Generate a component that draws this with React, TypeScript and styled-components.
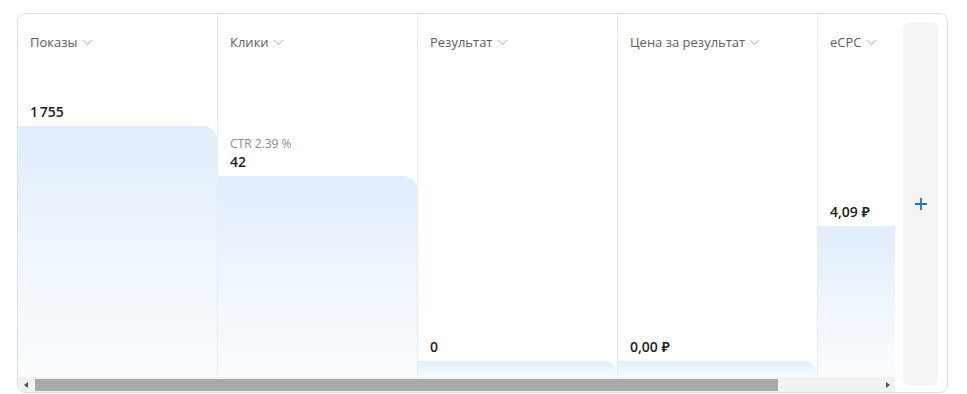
import React from "react";
import styled, { createGlobalStyle } from "styled-components";

const GlobalStyle = createGlobalStyle`
  html, body { margin: 0; padding: 0; background: #ffffff; }
  body { font-family: "Open Sans", "Noto Sans", "Liberation Sans", sans-serif; }
  * { box-sizing: border-box; }
`;

const Page = styled.div`
  padding: 13px 19px 1px 17px;
`;

const Card = styled.div`
  width: 931px;
  height: 380px;
  border: 1px solid #dedede;
  border-radius: 8px;
  display: flex;
  overflow: hidden;
  background: #fff;
`;

const ScrollArea = styled.div`
  width: 877px;
  display: flex;
  flex-direction: column;
  flex-shrink: 0;
`;

const Viewport = styled.div`
  flex: 1;
  overflow: hidden;
`;

const Track = styled.div`
  display: flex;
  height: 100%;
`;

const Column = styled.div`
  width: 200px;
  flex-shrink: 0;
  height: 100%;
  border-right: 1px solid #e3eefa;
  display: flex;
  flex-direction: column;
`;

const Header = styled.div`
  padding: 19px 12px 0;
  display: flex;
  align-items: center;
  gap: 4px;
  font-size: 13px;
  line-height: 18px;
  color: #5e5e5e;
`;

const Spacer = styled.div`
  flex: 1;
`;

const ValueBlock = styled.div`
  padding: 0 12px 5px;
  display: flex;
  flex-direction: column;
`;

const SubLabel = styled.div`
  font-size: 12px;
  line-height: 18px;
  color: #8c8c8c;
`;

const Value = styled.div`
  font-size: 14px;
  line-height: 18px;
  font-weight: 600;
  color: #222222;
`;

const Bar = styled.div<{ $h: number }>`
  height: ${(p) => p.$h}px;
  border-top-right-radius: 14px;
  background: linear-gradient(180deg, #e1edfb 0%, #eff6fd 55%, #fbfdff 100%);
  flex-shrink: 0;
`;

const ScrollBar = styled.div`
  height: 15px;
  background: #f1f1f1;
  display: flex;
  align-items: stretch;
  flex-shrink: 0;
`;

const ArrowButton = styled.div<{ $dir: "left" | "right" }>`
  width: 15px;
  display: flex;
  align-items: center;
  justify-content: center;
  flex-shrink: 0;
  &::after {
    content: "";
    width: 0;
    height: 0;
    border-top: 3.5px solid transparent;
    border-bottom: 3.5px solid transparent;
    ${(p) =>
      p.$dir === "left"
        ? "border-right: 4px solid #505050;"
        : "border-left: 4px solid #505050;"}
  }
`;

const ThumbTrack = styled.div`
  flex: 1;
  padding: 2px 0 1px 2px;
  display: flex;
`;

const Thumb = styled.div`
  background: #a8a8a8;
  height: 100%;
`;

const AddPanel = styled.div`
  margin: 8px 9px 6px 8px;
  width: 35px;
  flex-shrink: 0;
  background: #f4f4f4;
  border-radius: 8px;
  display: flex;
  align-items: center;
  justify-content: center;
`;

const AddButton = styled.button`
  border: 0;
  background: transparent;
  padding: 0;
  width: 20px;
  height: 20px;
  display: flex;
  align-items: center;
  justify-content: center;
  cursor: pointer;
  color: #1a74d0;
`;

const Chevron = () => (
  <svg width="11" height="7" viewBox="0 0 11 7" fill="none">
    <path d="M1 1.2 L5.5 5.5 L10 1.2" stroke="#c2c2c2" strokeWidth="1.1" />
  </svg>
);

const Plus = () => (
  <svg width="14" height="14" viewBox="0 0 14 14" fill="none">
    <path d="M7 1 V13 M1 7 H13" stroke="currentColor" strokeWidth="1.8" />
  </svg>
);

type Metric = { title: string; value: string; sub?: string; bar: number };

const metrics: Metric[] = [
  { title: "Показы", value: "1\u202F755", bar: 251 },
  { title: "Клики", value: "42", sub: "CTR 2.39 %", bar: 201 },
  { title: "Результат", value: "0", bar: 16 },
  { title: "Цена за результат", value: "0,00 ₽", bar: 16 },
  { title: "eCPC", value: "4,09 ₽", bar: 151 },
];

const visibleWidth = 877;
const contentWidth = metrics.length * 200;

export default function App() {
  const trackWidth = visibleWidth - 30 - 2;
  const thumbWidth = Math.round((trackWidth + 2) * (visibleWidth / contentWidth));
  return (
    <>
      <GlobalStyle />
      <Page>
        <Card>
          <ScrollArea>
            <Viewport>
              <Track>
                {metrics.map((m) => (
                  <Column key={m.title}>
                    <Header>
                      {m.title}
                      <Chevron />
                    </Header>
                    <Spacer />
                    <ValueBlock>
                      {m.sub && <SubLabel>{m.sub}</SubLabel>}
                      <Value>{m.value}</Value>
                    </ValueBlock>
                    <Bar $h={m.bar} />
                  </Column>
                ))}
              </Track>
            </Viewport>
            <ScrollBar>
              <ArrowButton $dir="left" />
              <ThumbTrack>
                <Thumb style={{ width: thumbWidth }} />
              </ThumbTrack>
              <ArrowButton $dir="right" />
            </ScrollBar>
          </ScrollArea>
          <AddPanel>
            <AddButton aria-label="Добавить">
              <Plus />
            </AddButton>
          </AddPanel>
        </Card>
      </Page>
    </>
  );
}
